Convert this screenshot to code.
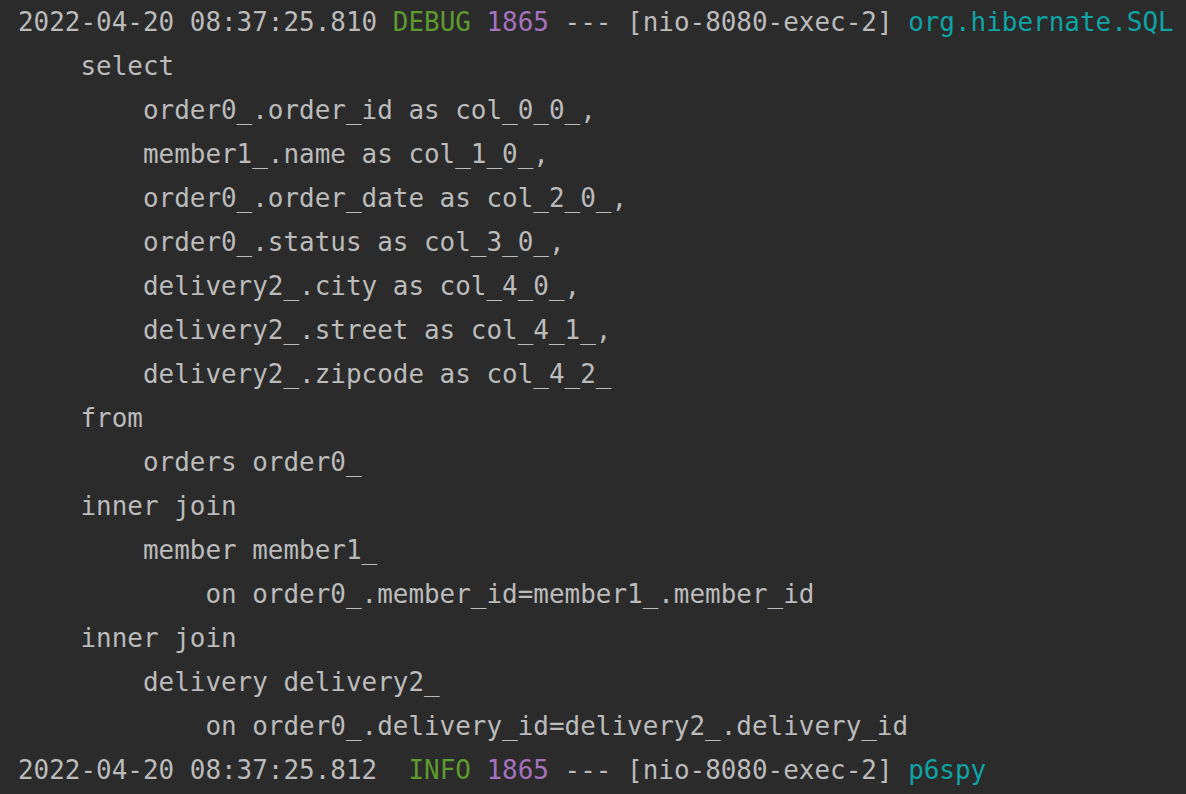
const gray = "text-[#bbbbbb]";

type Seg = { t: string; c?: string };

const header = (time: string, level: string, logger: string): Seg[] => [
  { t: `2022-04-20 ${time} ` },
  { t: level, c: "text-[#5d9b2f]" },
  { t: " " },
  { t: "1865", c: "text-[#a572bd]" },
  { t: " --- [nio-8080-exec-2] " },
  { t: logger, c: "text-[#0ea4a6]" },
];

const sql = [
  "    select",
  "        order0_.order_id as col_0_0_,",
  "        member1_.name as col_1_0_,",
  "        order0_.order_date as col_2_0_,",
  "        order0_.status as col_3_0_,",
  "        delivery2_.city as col_4_0_,",
  "        delivery2_.street as col_4_1_,",
  "        delivery2_.zipcode as col_4_2_",
  "    from",
  "        orders order0_",
  "    inner join",
  "        member member1_",
  "            on order0_.member_id=member1_.member_id",
  "    inner join",
  "        delivery delivery2_",
  "            on order0_.delivery_id=delivery2_.delivery_id",
];

const lines: Seg[][] = [
  header("08:37:25.810", "DEBUG", "org.hibernate.SQL"),
  ...sql.map((t) => [{ t }]),
  header("08:37:25.812", " INFO", "p6spy"),
];

const App = () => {
  return (
    <div className="w-[1186px] h-[794px] overflow-hidden bg-[#2b2b2b] pl-[18px]">
      <pre
        className={`${gray} text-[25.95px] leading-[44px] whitespace-pre`}
        style={{ fontFamily: '"DejaVu Sans Mono", monospace' }}
      >
        {lines.map((segs, i) => (
          <div key={i}>
            {segs.map((s, j) => (
              <span key={j} className={s.c}>
                {s.t}
              </span>
            ))}
          </div>
        ))}
      </pre>
    </div>
  );
};

export default App;
